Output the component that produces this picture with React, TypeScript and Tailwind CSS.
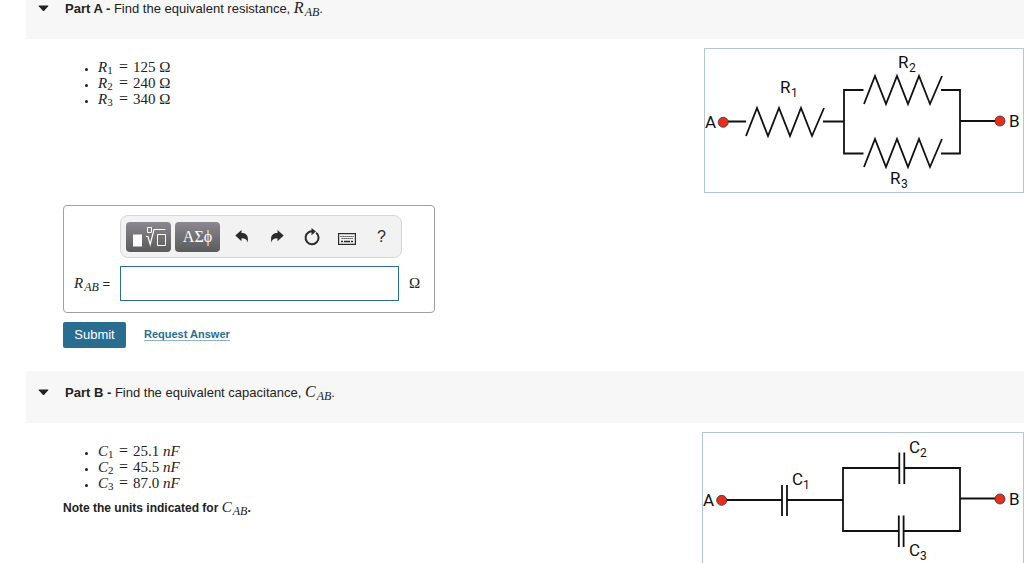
import type { ReactNode } from "react";

function Sym({ name, sub }: { name: string; sub: string }) {
  const italicSub = /[A-Z]/.test(sub);
  return (
    <span className="whitespace-nowrap font-['Liberation_Serif',serif] italic">
      {name}
      <sub
        className={
          italicSub
            ? "relative -bottom-[3px] ml-px align-baseline text-xs leading-none"
            : "relative -bottom-0.5 align-baseline text-[11px] leading-none not-italic"
        }
      >
        {sub}
      </sub>
    </span>
  );
}

function Part({ label, prompt, children }: { label: string; prompt: ReactNode; children: ReactNode }) {
  return (
    <section className="h-96">
      <header className="ml-[26px] flex h-[52px] items-start bg-[#f7f7f7] pt-[9px] pl-3">
        <button type="button" aria-label={`Collapse ${label}`} className="mt-[9px] mr-4">
          <svg width="11" height="7" viewBox="0 0 11 7">
            <path d="M1 .5h9q.8 0 .2.7L6.2 5.7q-.7.7-1.4 0L.8 1.2Q.2.5 1 .5z" fill="#222" />
          </svg>
        </button>
        <h2 className="text-[13px] leading-6 text-[#222]">
          <strong>{label} -</strong> {prompt}
        </h2>
      </header>
      <div className="mt-[9px] flex items-start justify-between pl-[63px]">{children}</div>
    </section>
  );
}

function Values({ rows }: { rows: { name: string; sub: string; value: ReactNode }[] }) {
  return (
    <ul className="mt-[11px] ml-[35px] list-disc text-[15px] leading-4">
      {rows.map((r) => (
        <li key={r.sub} className="h-4 marker:text-[11px]">
          <span className="flex h-4 gap-1 font-['Liberation_Serif',serif]">
            <span className="w-[17px]">
              <Sym name={r.name} sub={r.sub} />
            </span>
            <span className="w-2.5 text-base leading-4">=</span>
            <span>{r.value}</span>
          </span>
        </li>
      ))}
    </ul>
  );
}

function Label({ x, y, name, sub }: { x: number; y: number; name: string; sub?: string }) {
  return (
    <g fill="#111" className="font-[Roboto,sans-serif]">
      <text x={x} y={y} fontSize={17}>
        {name}
      </text>
      {sub && (
        <text x={x + 11} y={y + 4} fontSize={12}>
          {sub}
        </text>
      )}
    </g>
  );
}

function zigzag(x: number, top: number) {
  return [0, 11, 22, 33, 44, 55, 66, 78].map((d, i) => `${x + d},${i % 2 ? top : top + 28}`).join(" ");
}

function ResistorCircuit() {
  return (
    <figure className="shrink-0 border border-[#b4c6de]">
      <svg width="318" height="143" viewBox="705 49 318 143" role="img" aria-label="Resistor network between A and B">
        <g fill="none" stroke="#111" strokeWidth="1.8">
          <path d="M728 121.5H746M823 121.5H844M863.5 90H844V153.5H863.5M941 90H960V153.5H941M960 121H996" />
          <polyline points={zigzag(746, 108)} />
          <polyline points={zigzag(864, 76)} />
          <polyline points={zigzag(864, 139)} />
        </g>
        <g fill="#e62e1b" stroke="#333" strokeWidth=".8">
          <circle cx="723.2" cy="122.3" r="5" />
          <circle cx="1000" cy="121" r="5" />
        </g>
        <Label x={705} y={128} name="A" />
        <Label x={1009} y={127} name="B" />
        <Label x={780} y={93} name="R" sub="1" />
        <Label x={898} y={68} name="R" sub="2" />
        <Label x={890} y={184} name="R" sub="3" />
      </svg>
    </figure>
  );
}

function CapacitorCircuit() {
  return (
    <figure className="shrink-0 border border-[#b4c6de]">
      <svg width="320" height="143" viewBox="703 433 320 143" role="img" aria-label="Capacitor network between A and B">
        <g fill="none" stroke="#111" strokeWidth="1.8">
          <path d="M726 500H782M787 500H843M899 468H843V531H899M904 468H960V531H904M960 498.5H996" />
          <path d="M782 485V516M787 485V516M899.3 452.5V484M904.3 452.5V484M898.8 515.5V547M903.6 515.5V547" />
        </g>
        <g fill="#e62e1b" stroke="#333" strokeWidth=".8">
          <circle cx="721.7" cy="500.3" r="5" />
          <circle cx="1000" cy="499" r="5" />
        </g>
        <Label x={703} y={506} name="A" />
        <Label x={1009} y={505} name="B" />
        <Label x={792} y={485} name="C" sub="1" />
        <Label x={909} y={453} name="C" sub="2" />
        <Label x={909} y={556} name="C" sub="3" />
      </svg>
    </figure>
  );
}

const darkButton =
  "flex h-[30px] w-[45px] items-center justify-center rounded bg-linear-to-b from-[#8b8990] to-[#5b5a5c] text-white";
const iconButton = "flex h-[30px] w-[35px] items-center justify-center text-[#2b2b2b]";

function Toolbar() {
  return (
    <div role="toolbar" aria-label="Equation tools" className="flex h-[43px] w-[282px] items-center rounded-lg border border-[#d6d6d6] bg-[#f2f2f2] pl-[5px]">
      <button type="button" aria-label="Templates" className={darkButton}>
        <svg width="35" height="22" viewBox="0 0 35 22" fill="none">
          <path d="M2 8.5h9v12H2z" fill="#fff" />
          <path d="M16.5 1.500h4v5h-4z" stroke="#fff" />
          <path d="M15 10.500h2l2.200 8L23 3.500h11.500" stroke="#fff" strokeWidth="1.200" />
          <path d="M26.500 8.500h8v11h-8z" stroke="#fff" />
        </svg>
      </button>
      <button type="button" aria-label="Symbols" className={`${darkButton} ml-1 font-['Liberation_Serif',serif] text-base`}>
        ΑΣϕ
      </button>
      <button type="button" aria-label="Undo" className={`${iconButton} ml-1`}>
        <svg width="14" height="14" viewBox="0 0 14 14" fill="currentColor">
          <path d="M.3 5.400 6.500 0v3c4.600 0 7.600 2.600 6 9.600-.4-3-2.400-4.300-6-4.300v3z" />
        </svg>
      </button>
      <button type="button" aria-label="Redo" className={iconButton}>
        <svg width="14" height="14" viewBox="0 0 14 14" fill="currentColor">
          <path d="M13.700 5.400 7.500 0v3C2.900 3-.1 5.600 1.500 12.600c.4-3 2.400-4.300 6-4.300v3z" />
        </svg>
      </button>
      <button type="button" aria-label="Reset" className={iconButton}>
        <svg width="16" height="18" viewBox="0 0 16 18" fill="none">
          <path d="M12.200 4.700A6.500 6.500 0 1 1 4.500 4.300Q6 3.300 8.500 3.300" stroke="currentColor" strokeWidth="2" />
          <path d="M7.500 0 12 3.500 7.500 7.200z" fill="currentColor" />
        </svg>
      </button>
      <button type="button" aria-label="Keyboard" className={iconButton}>
        <svg width="18" height="12" viewBox="0 0 18 12" fill="none" stroke="currentColor" className="mt-1">
          <rect x=".6" y=".6" width="16.800" height="10.800" strokeWidth="1.200" />
          <path d="M2.500 3.500h13M3.500 5.500h12" strokeDasharray="1.200 .8" strokeWidth="1.200" />
          <path d="M3 8.500h2M6 8.500h6M13 8.500h2" strokeWidth="1.400" />
        </svg>
      </button>
      <button type="button" aria-label="Help" className={`${iconButton} font-['Liberation_Sans',sans-serif] text-base`}>
        ?
      </button>
    </div>
  );
}

function AnswerForm() {
  return (
    <form onSubmit={(e) => e.preventDefault()} className="mt-[98px]">
      <div className="h-[108px] w-[372px] rounded border border-[#a0a0a0] pt-[9px] pl-2.5">
        <div className="ml-[46px]">
          <Toolbar />
        </div>
        <div className="mt-2 flex items-center">
          <label htmlFor="answer" className="w-[46px] whitespace-nowrap text-[13px]">
            <span className="text-[15px]">
              <Sym name="R" sub="AB" />
            </span>{" "}
            =
          </label>
          <input id="answer" type="text" className="h-[35px] w-[279px] border border-[#2a6f95] bg-white px-2 text-sm outline-none" />
          <span className="ml-2.5 font-['Liberation_Serif',serif] text-[15px]">Ω</span>
        </div>
      </div>
      <div className="mt-[9px] flex items-start">
        <button type="submit" className="h-[26px] w-[63px] rounded-xs bg-[#296d91] text-[13px] text-white">
          Submit
        </button>
        <a href="#request" className="mt-1.5 ml-[18px] border-b border-[#8fb4c8] text-[11px] leading-3 font-bold text-[#296d91]">
          Request Answer
        </a>
      </div>
    </form>
  );
}

export default function App() {
  return (
    <main className="h-screen overflow-hidden bg-white font-['Liberation_Sans',Arial,sans-serif] text-[#222]">
      <div className="-mt-[13px]">
        <Part
          label="Part A"
          prompt={
            <>
              Find the equivalent resistance, <span className="text-base"><Sym name="R" sub="AB" /></span>.
            </>
          }
        >
          <div>
            <Values
              rows={[
                { name: "R", sub: "1", value: "125 Ω" },
                { name: "R", sub: "2", value: "240 Ω" },
                { name: "R", sub: "3", value: "340 Ω" },
              ]}
            />
            <AnswerForm />
          </div>
          <ResistorCircuit />
        </Part>
        <Part
          label="Part B"
          prompt={
            <>
              Find the equivalent capacitance, <span className="text-base"><Sym name="C" sub="AB" /></span>.
            </>
          }
        >
          <div>
            <Values
              rows={[
                { name: "C", sub: "1", value: <>25.1 <i>nF</i></> },
                { name: "C", sub: "2", value: <>45.5 <i>nF</i></> },
                { name: "C", sub: "3", value: <>87.0 <i>nF</i></> },
              ]}
            />
            <p className="mt-1.5 text-xs leading-5 font-bold">
              Note the units indicated for{" "}
              <span className="text-[15px] font-normal">
                <Sym name="C" sub="AB" />
              </span>
              .
            </p>
          </div>
          <CapacitorCircuit />
        </Part>
      </div>
    </main>
  );
}
